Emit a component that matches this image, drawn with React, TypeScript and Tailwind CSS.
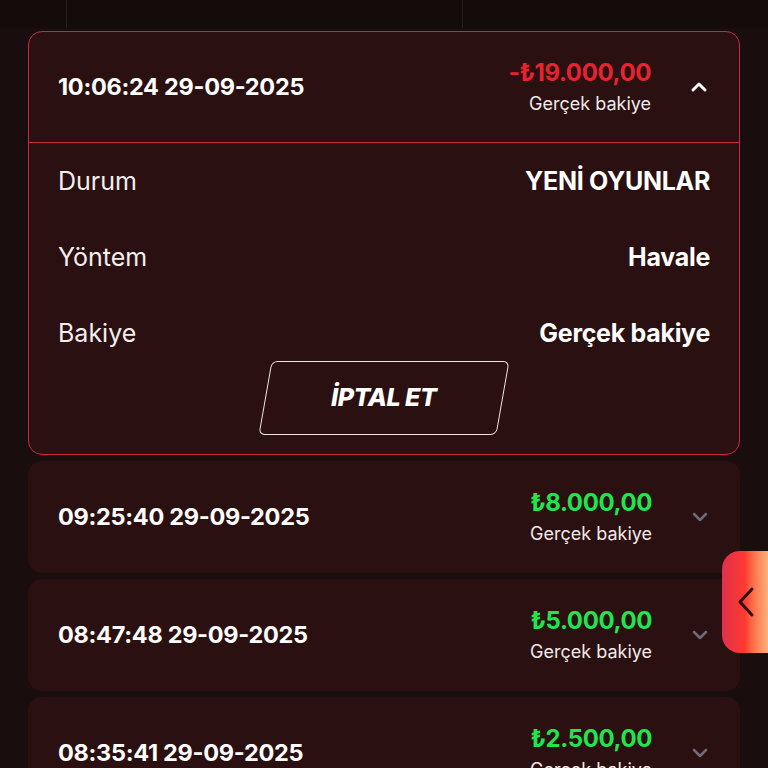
import React from 'react';
import { ChevronDown, ChevronUp } from 'lucide-react';

type Tx = {
  time: string;
  amount: string;
  negative?: boolean;
};

const rows: Tx[] = [
  { time: '09:25:40 29-09-2025', amount: '₺8.000,00' },
  { time: '08:47:48 29-09-2025', amount: '₺5.000,00' },
  { time: '08:35:41 29-09-2025', amount: '₺2.500,00' },
];

const details = [
  { label: 'Durum', value: 'YENİ OYUNLAR' },
  { label: 'Yöntem', value: 'Havale' },
  { label: 'Bakiye', value: 'Gerçek bakiye' },
];

function Amount({ amount, negative }: { amount: string; negative?: boolean }) {
  return (
    <div className="flex flex-col items-end">
      <span
        className={`text-[24px] font-bold leading-[30px] tracking-[-0.4px] ${
          negative ? 'text-[#e8232f]' : 'text-[#1fe64a]'
        }`}
      >
        {amount}
      </span>
      <span className="mt-[3px] text-[18px] leading-[26px] text-[#f1e9e9]">Gerçek bakiye</span>
    </div>
  );
}

export default function App() {
  return (
    <div
      className="relative h-[768px] w-[768px] overflow-hidden bg-[#1a0d0d]"
      style={{ fontFamily: 'Inter, "Noto Sans", sans-serif' }}
    >
      {/* bottom of the table above */}
      <div className="grid h-[28px] grid-cols-[67px_396px_1fr] bg-[#160b0b]">
        <div className="border-r border-[#2a1c1c]" />
        <div className="border-r border-[#2a1c1c]" />
        <div />
      </div>

      <div className="flex flex-col gap-[6px] px-[28px] pt-[3px]">
        {/* expanded item */}
        <div className="rounded-[14px] border-[1.5px] border-[#c9293d] bg-[#2a1011]">
          <div className="flex h-[111px] items-center justify-between border-b-[1.5px] border-[#c9293d] pl-[29px] pr-[28px]">
            <span className="text-[23.5px] font-bold tracking-[-0.3px] text-white">10:06:24 29-09-2025</span>
            <div className="flex items-center gap-[36px]">
              <Amount amount="-₺19.000,00" negative />
              <ChevronUp className="h-[24px] w-[24px] text-white" strokeWidth={3} />
            </div>
          </div>

          <div className="flex flex-col items-center px-[29px] pt-[25px] pb-[19px]">
            <div className="flex w-full flex-col gap-[48px]">
              {details.map((d) => (
                <div key={d.label} className="flex h-[28px] items-center justify-between">
                  <span className="text-[25px] text-[#f4eeee]">{d.label}</span>
                  <span className="text-[25px] font-bold tracking-[-0.3px] text-white">{d.value}</span>
                </div>
              ))}
            </div>

            <button className="mt-[13px] flex h-[74px] w-[238px] -skew-x-[10deg] items-center justify-center rounded-[6px] border-[1.5px] border-[#ece4e4] bg-transparent">
              <span className="skew-x-[10deg] text-[25px] font-extrabold italic tracking-[-0.5px] text-white">
                İPTAL ET
              </span>
            </button>
          </div>
        </div>

        {rows.map((r) => (
          <div
            key={r.time}
            className="flex h-[112px] shrink-0 items-center justify-between rounded-[14px] bg-[#2a1011] pl-[30px] pr-[28px]"
          >
            <span className="text-[23.5px] font-bold tracking-[-0.3px] text-white">{r.time}</span>
            <div className="flex items-center gap-[36px]">
              <Amount amount={r.amount} />
              <ChevronDown className="h-[24px] w-[24px] text-[#6f6b7a]" strokeWidth={2.5} />
            </div>
          </div>
        ))}
      </div>

      {/* side drawer tab */}
      <div className="absolute right-0 top-[551px] flex h-[102px] w-[46px] items-center rounded-l-[18px] bg-gradient-to-r from-[#e0304c] via-[#ff3a2e] to-[#f7b07a] pl-[15px]">
        <svg width="18" height="32" viewBox="0 0 18 32" fill="none">
          <path d="M15 3 L3 16 L15 29" stroke="#2a0d0d" strokeWidth="3" strokeLinecap="round" strokeLinejoin="round" />
        </svg>
      </div>
    </div>
  );
}
